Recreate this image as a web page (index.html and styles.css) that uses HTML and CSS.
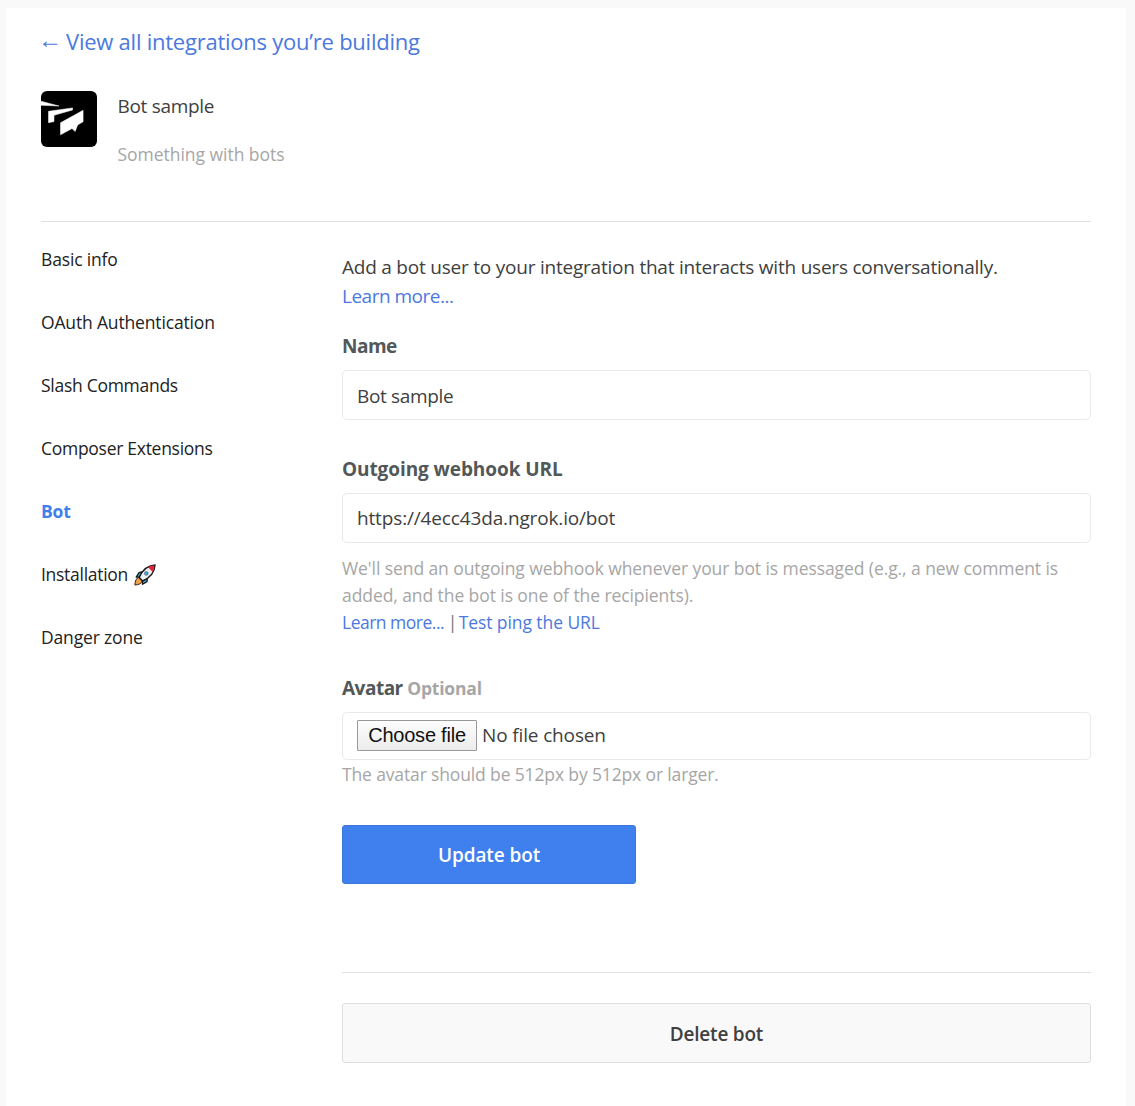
FILE: index.html
```
<!DOCTYPE html>
<html lang="en">
<head>
<meta charset="utf-8">
<title>Bot sample – Bot</title>
<link rel="stylesheet" href="styles.css">
</head>
<body>
<div class="panel">
  <a class="back" href="#"><span class="back-arrow">←</span><span>View all integrations you’re building</span></a>

  <header class="app">
    <svg class="app-logo" viewBox="0 0 56 56" aria-hidden="true">
      <rect width="56" height="56" rx="6" fill="#000"/>
      <path fill="#fff" stroke="#fff" stroke-width=".5" d="M0 10.200 18 15 0 14.300zM7.500 20.300 31.500 16.900V19L13 24.300V30.600L7.500 31.700zM19.500 31.800 42.100 19.300V30.800L36.600 34 34.200 40.400 31 37.600 19.500 43.800z"/>
    </svg>
    <div>
      <h1 class="app-name">Bot sample</h1>
      <p class="app-desc">Something with bots</p>
    </div>
  </header>

  <div class="columns">
    <nav class="menu">
      <a href="#">Basic info</a>
      <a href="#">OAuth Authentication</a>
      <a class="tight" href="#">Slash Commands</a>
      <a class="tight" href="#">Composer Extensions</a>
      <a href="#" class="current">Bot</a>
      <a class="tight" href="#">Installation
        <svg class="rocket" viewBox="0 0 22 22" aria-hidden="true">
          <path d="M2.200 13.200 5 8.700 9 7.600 8 13z M13.400 13.600 13 17.600 8.500 20.200 8.400 15z" fill="#3fa9e0" stroke="#151515" stroke-width="1.300" stroke-linejoin="round"/>
          <path d="M4.800 13.400C2 14.200 1.200 17 .9 21c4-.3 6.500-1.200 7.400-4.200z" fill="#f2a04e" stroke="#3a2410" stroke-width="1"/>
          <path d="M5.200 13.500C8 6.500 13 1.600 21 1c-.4 8-5.500 13-12.500 16z" fill="#eef0f3" stroke="#151515" stroke-width="1.400" stroke-linejoin="round"/>
          <path d="M14 3.200C16.500 1.900 19 1.600 20.400 1.600c0 1.800-.4 4.300-1.700 6.400z" fill="#e0243c"/>
          <circle cx="12.300" cy="9.400" r="1.900" fill="#3fa9e0" stroke="#555" stroke-width=".6"/>
        </svg></a>
      <a href="#">Danger zone</a>
    </nav>

    <main class="content">
      <p class="intro">Add a bot user to your integration that interacts with users conversationally.<br><a class="more" href="#">Learn more...</a></p>

      <label class="label label-name" for="name">Name</label>
      <input class="field field-name" id="name" type="text" value="Bot sample">

      <label class="label label-url" for="url">Outgoing webhook URL</label>
      <input class="field field-url" id="url" type="text" value="https://4ecc43da.ngrok.io/bot">
      <p class="help help-url">We'll send an outgoing webhook whenever your bot is messaged (e.g., a new comment is added, and the bot is one of the recipients).<br><a class="more" href="#">Learn more...</a><span class="bar">|</span><a href="#">Test ping the URL</a></p>

      <div class="label label-avatar">Avatar <span class="optional">Optional</span></div>
      <div class="field file">
        <button class="file-button" type="button">Choose file</button>
        <span class="file-name">No file chosen</span>
      </div>
      <p class="help help-avatar">The avatar should be 512px by 512px or larger.</p>

      <button class="button update" type="button">Update bot</button>
      <hr class="rule">
      <button class="button delete" type="button">Delete bot</button>
    </main>
  </div>
</div>
</body>
</html>
```

FILE: styles.css
```
* { box-sizing: border-box; }

body {
  margin: 0;
  padding: 8px 9px 0 6px;
  background: #f9f9f9;
  color: #404040;
  font: 19px/29px "Open Sans", "Noto Sans", sans-serif;
  letter-spacing: -.22px;
}

h1, p { margin: 0; font-weight: 400; }
a { color: #4b79de; text-decoration: none; }
input, button { font: inherit; letter-spacing: inherit; color: inherit; }

.panel {
  min-height: 1098px;
  padding: 18px 35px 0;
  background: #fff;
}

.back {
  display: flex;
  align-items: flex-start;
  gap: 7px;
  font-size: 22px;
  line-height: 30px;
  letter-spacing: -.24px;
}
.back-arrow { width: 21px; margin-left: -3px; font-size: 24px; line-height: 26px; }

.app {
  display: flex;
  gap: 20.5px;
  height: 131px;
  margin-top: 35px;
  border-bottom: 1px solid #dfe0e0;
}
.app-logo { flex: none; width: 56px; height: 56px; }
.app-name { font-size: 19px; line-height: 30px; letter-spacing: -.3px; }
.app-desc {
  margin-top: 19px;
  color: #a6a6a6;
  font-size: 17.5px;
  line-height: 28px;
  letter-spacing: -.03px;
}

.columns { display: grid; grid-template-columns: 301px 1fr; }

.menu {
  display: flex;
  flex-direction: column;
  gap: 35px;
  padding-top: 23px;
  font-size: 17.5px;
  line-height: 28px;
  letter-spacing: -.16px;
}
.menu a { display: flex; align-items: center; gap: 6px; color: #222; }
.menu .tight { letter-spacing: -.28px; }
.menu .current { color: #3f80ee; font-weight: 700; }
.rocket { width: 22px; height: 22px; margin-top: 2px; }

.content { padding-top: 31px; }
.more { letter-spacing: -.5px; }

.label {
  display: block;
  color: #525858;
  font-weight: 700;
  line-height: 28px;
}
.label-name { margin-top: 21px; letter-spacing: -.5px; }
.label-url { margin-top: 35px; letter-spacing: -.08px; }
.label-avatar { margin-top: 38px; letter-spacing: -.5px; }
.optional { color: #a6a6a6; font-size: 17.5px; letter-spacing: -.2px; }

.field {
  display: block;
  width: 100%;
  height: 50px;
  margin-top: 10px;
  padding: 0 14px;
  border: 1px solid #e8e9e9;
  border-radius: 5px;
  background: #fff;
}
.field-name { padding-top: 2px; letter-spacing: -.35px; }
.field-url { letter-spacing: -.15px; }

.help {
  color: #a6a6a6;
  font-size: 17.5px;
  line-height: 27px;
  letter-spacing: -.08px;
}
.help-url { margin-top: 12px; }
.help-avatar { margin-top: 1px; letter-spacing: -.14px; }
.bar { margin: 0 1.5px 0 3.5px; color: #777; }

.file {
  display: flex;
  align-items: center;
  gap: 5px;
  height: 48px;
  padding: 0 14px 1px;
}
.file-name { letter-spacing: -.14px; }
.file-button {
  width: 120px;
  height: 31px;
  padding: 0 0 1px;
  border: 1px solid #999;
  border-radius: 1px;
  background: linear-gradient(#fdfdfd, #ececec);
  color: #111;
  font: 20px/28px "Liberation Sans", Arial, sans-serif;
}

.button {
  display: block;
  padding: 2px 0 0;
  border-radius: 3px;
  font-weight: 600;
}
.update {
  width: 294px;
  height: 59px;
  margin-top: 37px;
  border: 1px solid #3b76da;
  background: #3f80ee;
  color: #fff;
  letter-spacing: -.1px;
}
.rule {
  height: 1px;
  margin: 88px 0 30px;
  border: 0;
  background: #dfe0e0;
}
.delete {
  width: 100%;
  height: 60px;
  border: 1px solid #dedede;
  background: #f9f9f9;
}
```
